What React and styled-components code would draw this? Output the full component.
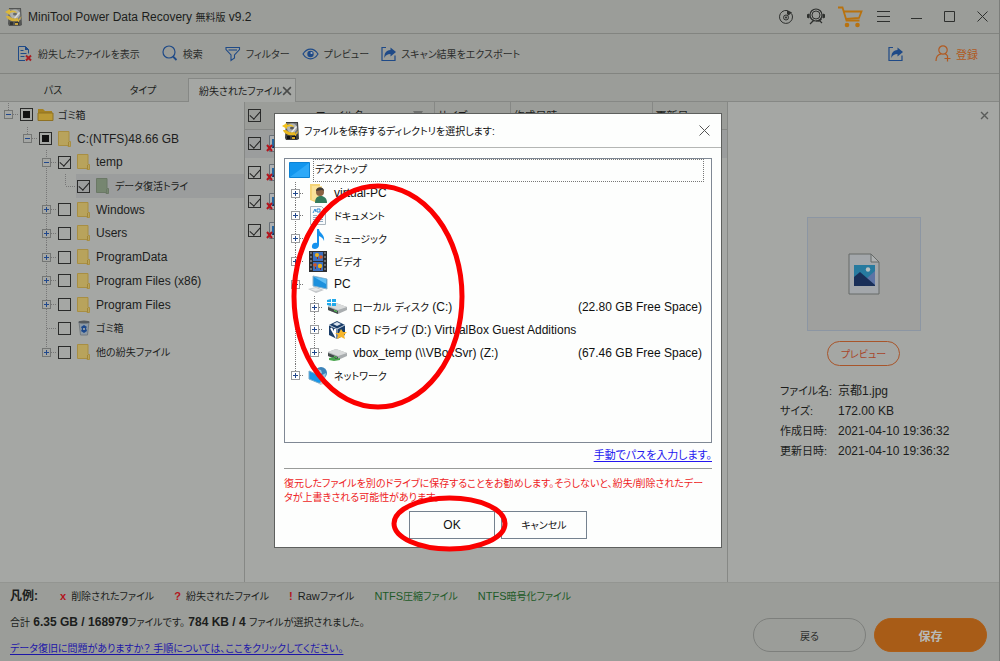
import React from "react";
import styled, { createGlobalStyle, css } from "styled-components";

const GlobalStyle = createGlobalStyle`
  * {
    box-sizing: border-box;
  }
  body {
    margin: 0;
    background: #9b9d99;
    color: #1c1d1c;
    font-family: "Liberation Sans", "Noto Sans CJK JP", sans-serif;
    font-size: 12px;
    font-feature-settings: "palt";
  }
  button, input {
    font: inherit;
    font-feature-settings: inherit;
    color: inherit;
    margin: 0;
  }
  button {
    padding: 0;
    border: 0;
    background: transparent;
    cursor: pointer;
  }
  svg {
    display: block;
    flex: none;
  }
`;

/* ---------- icons ---------- */

const AppIcon = ({ dim }) => (
  <svg width="18" height="20" viewBox="0 0 18 20" opacity={dim ? 0.75 : 1}>
    <path d="M4 1h12l1 17-2 1H4L3 17z" fill="#3b3d3e" />
    <path d="M5 2h10l1 11H4z" fill="#77797a" />
    <ellipse cx="10" cy="7" rx="5" ry="4.5" fill="#b4b7b7" />
    <ellipse cx="10" cy="7" rx="2" ry="1.6" fill="#55585a" />
    <path d="M9 11l5-6 1 1-5 6z" fill="#eee" />
    <path d="M0 5l5-3v2c4-1 6 0 7 2-3-1-5-1-7 0v2z" fill="#f2c21c" />
    <path d="M17 9l-4 4v-2c-4 1-7 0-9-2H1c1 4 6 6 12 5v2z" fill="#e8b820" />
    <path d="M5 15h3v3H5zM10 15h4v3h-4z" fill="#101112" />
    <path d="M10 16h3v2h-3z" fill="#d6a520" />
  </svg>
);

const LostFileIcon = () => (
  <svg width="16" height="17" viewBox="0 0 16 17" fill="none">
    <path d="M8 15.500H1.500V1.500h7l3 3v4" stroke="#1f4a87" />
    <path d="M8 1l4 4H8z" fill="#1f4a87" />
    <path d="M3.500 5.500h3M3.500 8.500h6M3.500 11.500h4" stroke="#1f4a87" />
    <path d="M9 10.500l5 5M14 10.500l-5 5" stroke="#a81d24" strokeWidth="2" />
  </svg>
);

const SearchIcon = () => (
  <svg width="16" height="17" viewBox="0 0 16 17" fill="none" stroke="#1f4a87">
    <circle cx="7" cy="7" r="6" strokeWidth="1.200" />
    <path d="M11 11.500l3.500 3.500" strokeWidth="1.800" />
  </svg>
);

const FilterIcon = () => (
  <svg width="16" height="16" viewBox="0 0 16 16" fill="none" stroke="#1f4a87" strokeWidth="1.100">
    <path d="M1 1.500h13.500v2L9.500 9v3L6 14.500V9L1 3.500z" />
    <path d="M3.500 4h8.500" />
  </svg>
);

const EyeIcon = () => (
  <svg width="17" height="12" viewBox="0 0 17 12" fill="none">
    <path d="M1 6c4-6.500 11-6.500 15 0-4 6.500-11 6.500-15 0z" stroke="#1f4a87" strokeWidth="1.200" />
    <circle cx="8.500" cy="6" r="3.200" fill="#1f4a87" />
    <circle cx="9.500" cy="5" r="1.100" fill="#a9b4c4" />
  </svg>
);

const ExportIcon = () => (
  <svg width="15" height="16" viewBox="0 0 15 16" fill="none">
    <path d="M5 1.500H1v13h13V9.500" stroke="#1f4a87" strokeWidth="1.200" />
    <path d="M9.500 1.500L15 6l-5.500 4.500V8C6.500 8 4.500 9 3.500 12 3 7.500 5 4.500 9.500 4z" fill="#1f4a87" />
  </svg>
);

const UserIcon = () => (
  <svg width="16" height="17" viewBox="0 0 16 17" fill="none" stroke="#b05a22" strokeWidth="1.200">
    <circle cx="8" cy="5" r="4.200" />
    <path d="M1 16c0-4 2-6.500 5-7M10 9c1 0 2 1 2.500 2M9.500 13.500h6M12.500 10.500v6" />
  </svg>
);

const DiscIcon = () => (
  <svg width="16" height="16" viewBox="0 0 16 16" fill="none" stroke="#2e302e">
    <path d="M9 1.500A6.500 6.500 0 1 0 14.500 8c0-1.500-.5-2.500-1-3.500" />
    <circle cx="8" cy="8.500" r="2.500" />
    <circle cx="8" cy="8.500" r=".7" fill="#2e302e" />
    <path d="M9 1l5 2.500-3.500 3L9 5z" fill="#2e302e" stroke="none" />
  </svg>
);

const SupportIcon = () => (
  <svg width="18" height="17" viewBox="0 0 18 17" fill="none" stroke="#2e302e">
    <circle cx="9" cy="7" r="6" strokeWidth="1.200" />
    <circle cx="9" cy="7" r="4" strokeWidth="1" />
    <path d="M7 12l-4 4M9 13h4l2 2M14.500 11l-3 2.500" strokeWidth="1.200" />
    <path d="M2 6v4l-2-1V7zM16 6v4l2-1V7z" fill="#2e302e" />
  </svg>
);

const CartIcon = () => (
  <svg width="25" height="22" viewBox="0 0 25 22" fill="none" stroke="#b8720f" strokeWidth="1.800">
    <path d="M0 1.500h4.500l4 13h13" />
    <path d="M6 5.500h17.500l-2.500 6.500-13 1" />
    <circle cx="9" cy="19" r="2.300" fill="#b8720f" stroke="none" />
    <circle cx="19.500" cy="19" r="2.300" fill="#b8720f" stroke="none" />
  </svg>
);

const LineIcon = ({ d, size = 13, color = "#2e302e", weight = 1 }) => (
  <svg width={size} height={size} viewBox="0 0 13 13" fill="none" stroke={color} strokeWidth={weight}>
    <path d={d} />
  </svg>
);

const MENU = "M0 1.500h13M0 6.500h13M0 11.500h13";
const MINIMIZE = "M1 8.500h11";
const MAXIMIZE = "M1.500 1.500h10v10h-10z";
const CLOSE = "M1.500 1.500l10 10M11.500 1.500l-10 10";

const OpenFolder = () => (
  <svg width="17" height="14" viewBox="0 0 17 14">
    <path d="M1 12V1h5l2 2h7v2H4z" fill="#a58222" />
    <path d="M1 5h15v7.500H1z" fill="#bb9a35" stroke="#8f7224" />
  </svg>
);

const Folder = ({ green }) => (
  <svg width="13" height="16" viewBox="0 0 13 16">
    <path d="M.5.500h10.500v10h1.500v5h-2.500v-1H.5z" fill={green ? "#768670" : "#b8a35c"} stroke={green ? "#6b7866" : "#a88e42"} />
    <path d="M10.500 11v4" stroke={green ? "#6b7866" : "#a18638"} />
  </svg>
);

const TrashIcon = () => (
  <svg width="14" height="16" viewBox="0 0 14 16">
    <path d="M2 2h10l-1.500 13h-7z" fill="#8d9aa6" stroke="#747b80" />
    <ellipse cx="7" cy="2" rx="5.500" ry="1.500" fill="#555a5e" />
    <path d="M4 7l3-2 3 2-1 1 1 3-3 2-3-2 1-2zM6 8v2h2V8z" fill="#1c488c" fillRule="evenodd" />
  </svg>
);

const DeletedPicture = () => (
  <svg width="18" height="18" viewBox="0 0 18 18">
    <path d="M3.500.500h13v16h-13z" fill="#adb0b2" stroke="#687078" />
    <path d="M6 4h10v9H6z" fill="#27659e" />
    <path d="M6 13l4-5 3 3 3-2v4z" fill="#142f5a" />
    <path d="M1 10l5 6M6 10l-5 6" stroke="#b3141c" strokeWidth="2" />
  </svg>
);

const PictureFile = () => (
  <svg width="32" height="42" viewBox="0 0 32 42">
    <path d="M1 1h22l8 8v32H1z" fill="#a3a7ab" stroke="#666a68" />
    <path d="M23 1v8h8z" fill="#adb0b1" stroke="#666a68" />
    <path d="M6 12h21v21H6z" fill="#277a9f" />
    <path d="M18 26l9-8v15z" fill="#5d74a5" />
    <path d="M6 24l6-5 15 13v1H6z" fill="#192f58" />
    <circle cx="20" cy="16.500" r="2.200" fill="#b9bfc0" />
  </svg>
);

const DesktopIcon = () => (
  <svg width="21" height="16" viewBox="0 0 21 16">
    <path d="M.5.500h20v15H.5z" fill="#1296ee" stroke="#0c82d4" />
    <path d="M1 15L20 1v14z" fill="#2ea9f8" />
  </svg>
);

const UserFolder = () => (
  <svg width="18" height="20" viewBox="0 0 18 20">
    <path d="M1 1h10v17l-5 1-5-2z" fill="#f5d477" />
    <path d="M3 3h10v14H3z" fill="#fae29a" />
    <path d="M6 20c0-6 3-7 6-7s6 2 6 7z" fill="#347b5d" />
    <circle cx="11" cy="9" r="4" fill="#8c6344" />
    <path d="M7 8c0-5 8-5 8 0l-2-1z" fill="#413a33" />
  </svg>
);

const DocumentIcon = () => (
  <svg width="16" height="19" viewBox="0 0 16 19">
    <path d="M.5.500h11l4 4v14H.5z" fill="#f7fafc" stroke="#a9b4bc" />
    <path d="M3 7l2-4 1 3M7 3h3v3H7z" fill="none" stroke="#3089d4" />
    <path d="M3 9.500h4M9 9.500h4M3 11.500h4M9 11.500h4M3 13.500h4M9 13.500h4M3 15.500h10" stroke="#8eaac1" />
  </svg>
);

const MusicIcon = () => (
  <svg width="14" height="20" viewBox="0 0 14 20">
    <path d="M6 0h2c0 4 6 5 5 12-1-3-3-4-5-5v9c0 5-8 5-7 1 0-3 3-4 5-3z" fill="#1492ee" />
  </svg>
);

const VideoIcon = () => (
  <svg width="18" height="21" viewBox="0 0 18 21">
    <path d="M0 0h18v21H0z" fill="#2d2e31" />
    <path d="M4 1h10v9H4zM4 11h10v9H4z" fill="#3a6fc0" />
    <path d="M2 1v20M16 1v20" stroke="#aeb0b4" strokeDasharray="2 2" />
    <circle cx="8" cy="4" r="2" fill="#edb21c" />
    <circle cx="12" cy="6" r="1.800" fill="#d9561f" />
    <circle cx="6" cy="14" r="1.800" fill="#d9561f" />
    <circle cx="11" cy="15" r="2.200" fill="#edb21c" />
    <path d="M8 7h1M11 18h1M6 17h1" stroke="#8a2c18" strokeWidth="2" />
  </svg>
);

const PcIcon = () => (
  <svg width="22" height="19" viewBox="0 0 22 19">
    <path d="M6 1l14 3v10L6 11z" fill="#1d91dd" stroke="#8eb4cc" />
    <path d="M7 2l12 7V4z" fill="#62bff4" />
    <path d="M1 14l8-2 8 3-8 3z" fill="#c5c8ca" />
    <path d="M3 14l6-1 5 2-6 1z" fill="#e8e9e9" />
  </svg>
);

const DriveIcon = ({ kind }) => (
  <svg width="22" height="16" viewBox="0 0 22 16">
    <path d="M2 7l8-3 11 4v3l-9 4L2 11z" fill="#a9adaf" />
    <path d="M2 7l8-3 11 4-9 3z" fill="#d9dbdb" />
    <path d="M2 8l10 4v3L2 11z" fill="#454b4c" />
    <path d="M8 11.500l3 1" stroke="#52dc54" />
    {kind === "system" && <path d="M1 1l4-1v3H1zM6 0h4v3H6zM1 4h4v3L1 6zM6 4h4v3H6z" fill="#22a9ea" />}
    {kind === "network" && <path d="M3 13l5-1 1 2 5-1v2l-6 1-5-1z" fill="#49a54e" />}
  </svg>
);

const VirtualBoxIcon = () => (
  <svg width="19" height="20" viewBox="0 0 19 20">
    <path d="M1 5l8-4 8 4v10l-8 4-8-4z" fill="#183c68" />
    <path d="M1 5l8 4 8-4M9 9v10" stroke="#c9d3de" fill="none" />
    <path d="M5 4l4-2 4 2-4 2z" fill="#d9e4ef" />
    <path d="M3 8l4 7V9" stroke="#fff" strokeWidth="2" fill="none" />
    <path d="M13 9l2 3h4l-3 3 1 4-4-2-4 2 1-4-3-2h4z" fill="#f6b62b" />
  </svg>
);

const NetworkIcon = () => (
  <svg width="22" height="20" viewBox="0 0 22 20">
    <circle cx="14" cy="7" r="6" fill="#3c83b9" />
    <path d="M10 3l4 1 1 3-3 2-3-3zM15 9l4-2-1 5-3 1z" fill="#98c5dd" />
    <path d="M2 5l12 5v8L2 13z" fill="#1796e8" stroke="#7cabc8" />
    <path d="M12 17l6-2 2 2-7 2z" fill="#c8cccd" />
  </svg>
);

/* ---------- text ---------- */

const Kana = styled.span`
  font-size: 10px;
  line-height: 1;
`;

// Japanese runs are set smaller than the latin ones beside them
const Mixed = ({ children }) =>
  children
    .split(/([\u3000-\u9fff\uff00-\uffef]+)/)
    .map((part, i) => (i % 2 ? <Kana key={i}>{part}</Kana> : part));

/* ---------- window frame ---------- */

const Window = styled.div`
  display: flex;
  flex-direction: column;
  min-height: 100vh;
  border-right: 1px solid #7b7d7a;
`;

const TitleBar = styled.header`
  display: flex;
  align-items: center;
  height: 34px;
  padding: 0 10px 0 5px;
  border-bottom: 1px solid #828480;
`;

const AppTitle = styled.h1`
  flex: 1;
  margin: 0 0 0 5px;
  font-size: 12px;
  font-weight: 400;
`;

const WindowButtons = styled.div`
  display: flex;
  align-items: center;
  gap: 20px;
`;

const QuickButtons = styled(WindowButtons)`
  gap: 13px;
  margin-right: 14px;
`;

const ToolBar = styled.nav`
  display: flex;
  align-items: center;
  gap: 12px;
  height: 40px;
  padding: 0 21px 0 17px;
  border-bottom: 1px solid #828480;
`;

const ToolButton = styled.button`
  display: flex;
  align-items: center;
  gap: 5px;
  font-size: ${(p) => (p.$accent ? 11 : 10)}px;
  white-space: nowrap;
  color: ${(p) => (p.$accent ? "#b05a22" : "#2c2d2c")};
  margin-left: ${(p) => (p.$push ? "auto" : "0")};
  margin-right: ${(p) => p.$after || 0}px;
`;

const TabBar = styled.div`
  display: flex;
  align-items: flex-end;
  height: 28px;
  padding-left: 8px;
  border-bottom: 1px solid #868885;
`;

const Tab = styled.button`
  width: 90px;
  height: 23px;
  font-size: 10px;
  white-space: nowrap;
  ${(p) =>
    p.$active &&
    css`
      display: flex;
      align-items: center;
      justify-content: flex-end;
      width: 108px;
      height: 24px;
      margin-bottom: -1px;
      padding-right: 3px;
      border: 1px solid #868885;
      border-bottom: 0;
      background: #a5a7a4;
    `}
`;

const Main = styled.main`
  display: grid;
  grid-template-columns: 244px 1fr 271px;
  flex: 1;
  background: #a5a7a4;
`;

/* ---------- trees ---------- */

const dotsDown = "repeating-linear-gradient(#777 0 1px, transparent 1px 2px)";
const dotsAcross = "repeating-linear-gradient(90deg, #777 0 1px, transparent 1px 2px)";

const TreeList = styled.ul`
  display: grid;
  grid-auto-rows: 1fr;
  height: 262px;
  margin: 0;
  padding: 1px 0 0;
  list-style: none;
`;

const PathList = styled(TreeList)`
  height: 228px;
  padding: 0;
`;

const TreeRow = styled.li`
  display: flex;
  align-items: stretch;
  white-space: nowrap;
`;

const Guide = styled.span`
  display: flex;
  align-items: center;
  width: 19px;
  padding-left: ${(p) => (p.$wide ? 6 : 4)}px;
  background-repeat: no-repeat;
  background-image: ${(p) =>
    p.$line === "none" ? "none" : p.$line === "through" ? dotsDown : `${dotsDown}, ${dotsAcross}`};
  background-position: ${(p) => (p.$wide ? 10 : 8)}px 0, right center;
  background-size: 1px ${(p) => (p.$line === "end" ? "50%" : "100%")}, 10px 1px;
`;

const Expander = styled.button`
  width: 9px;
  height: 9px;
  border: 1px solid ${(p) => (p.$light ? "#9a9c9e" : "#747674")};
  color: #21488c;
  background:
    linear-gradient(currentColor, currentColor) center / 5px 1px no-repeat,
    linear-gradient(currentColor, currentColor) center / 1px ${(p) => (p.$open ? 1 : 5)}px no-repeat,
    ${(p) => (p.$light ? "#fff" : "#a5a7a4")};
`;

const NodeLabel = styled.label`
  display: flex;
  align-items: center;
  flex: 1;
  padding-left: 1px;
  background: ${(p) => (p.$selected ? "#9b9d9d" : "none")};
`;

const Checkbox = styled.input.attrs({ type: "checkbox" })`
  appearance: none;
  display: grid;
  place-items: center;
  flex: none;
  width: 13px;
  height: 13px;
  border: 1px solid #2a2b2a;
  &:checked::after {
    content: "";
    width: 9px;
    height: 5px;
    border-left: 1px solid #222;
    border-bottom: 1px solid #222;
    transform: translateY(-1px) rotate(-48deg);
  }
  ${(p) =>
    p.$partial &&
    css`
      &::after {
        content: "";
        width: 7px;
        height: 7px;
        background: #111;
      }
    `}
`;

const IconSlot = styled.span`
  display: flex;
  align-items: center;
  justify-content: center;
  flex: none;
  width: ${(p) => (p.$wide ? 28 : 25)}px;
`;

/* ---------- file table ---------- */

const FilePane = styled.section`
  min-width: 0;
  overflow: hidden;
  border-left: 1px solid #868885;
  border-right: 1px solid #868885;
`;

const FileTable = styled.table`
  width: 100%;
  table-layout: fixed;
  border-collapse: collapse;
  th {
    height: 27px;
    padding: 0 3px;
    border-bottom: 1px solid #868885;
    background: #9b9d99;
    font-size: 11px;
    font-weight: 400;
    text-align: left;
    white-space: nowrap;
  }
  th + th + th {
    border-left: 1px solid #868885;
  }
  td {
    height: 29px;
    padding: 0 3px;
  }
  tbody tr:first-child {
    background: #9b9d9d;
  }
`;

const HeadCell = styled.div`
  display: flex;
  align-items: center;
  justify-content: space-between;
  padding: 0 8px 0 50px;
`;

const SortArrow = styled.span`
  border: 5px solid transparent;
  border-top: 8px solid #6e706e;
  border-bottom: 0;
`;

/* ---------- preview pane ---------- */

const PreviewPane = styled.aside`
  display: flex;
  flex-direction: column;
  align-items: center;
`;

const PaneClose = styled.button`
  align-self: flex-end;
  padding: 9px 10px;
`;

const Thumbnail = styled.div`
  display: flex;
  align-items: center;
  justify-content: center;
  width: 114px;
  height: 114px;
  margin-top: 88px;
  border: 1px solid #8c96a3;
  background: #9fa09e;
`;

const PreviewButton = styled.button`
  width: 73px;
  height: 25px;
  margin: 10px 0 15px;
  border: 1px solid #a8552a;
  border-radius: 13px;
  color: #a8452a;
  font-size: 10px;
`;

const FileInfo = styled.dl`
  display: grid;
  grid-template-columns: 58px 1fr;
  align-self: stretch;
  margin: 0 0 0 52px;
  line-height: 20px;
  dt {
    font-size: 11px;
  }
  dd {
    margin: 0;
  }
`;

/* ---------- footer ---------- */

const Footer = styled.footer`
  display: flex;
  justify-content: space-between;
  align-items: flex-start;
  height: 79px;
  padding: 0 12px 0 10px;
  border-top: 1px solid #939591;
  background: #9b9d99;
`;

const Notes = styled.div`
  line-height: 26px;
  white-space: nowrap;
  p {
    height: 26px;
    margin: 0;
  }
`;

const Legend = styled.p`
  display: flex;
  gap: 20px;
`;

const LegendTitle = styled.b`
  margin-right: 2px;
`;

const LegendItem = styled.span`
  font-size: 11px;
  color: ${(p) => (p.$green ? "#1c5a26" : "inherit")};
`;

const Mark = styled.b`
  margin-right: 5px;
  color: #b3141c;
`;

const Link = styled.a`
  color: ${(p) => (p.$bright ? "#2416f0" : "#1d16a8")};
  font-size: ${(p) => (p.$bright ? 11 : 10)}px;
  text-underline-offset: 2px;
`;

const FooterButtons = styled.div`
  display: flex;
  gap: 8px;
  margin-top: 35px;
`;

const PillButton = styled.button`
  width: 113px;
  height: 34px;
  border: 1px solid ${(p) => (p.$primary ? "#ac5f19" : "#7d7f7c")};
  border-radius: 17px;
  background: ${(p) => (p.$primary ? "#a85c17" : "transparent")};
  color: ${(p) => (p.$primary ? "#b8bab8" : "#2c2d2c")};
  font-size: ${(p) => (p.$primary ? 12 : 10)}px;
  font-weight: ${(p) => (p.$primary ? 700 : 400)};
`;

/* ---------- dialog ---------- */

const Overlay = styled.div`
  position: fixed;
  inset: 0;
  display: flex;
  align-items: center;
  justify-content: center;
  padding-right: 4px;
`;

const Dialog = styled.div`
  position: relative;
  width: 448px;
  border: 1px solid #5e605e;
  background: #fdfefd;
  color: #111;
`;

const DialogHead = styled.div`
  display: flex;
  align-items: center;
  gap: 4px;
  height: 34px;
  padding: 0 10px 0 7px;
  border-bottom: 1px solid #b4b6b4;
  h2 {
    flex: 1;
    margin: 0;
    font-size: 10px;
    font-weight: 400;
  }
`;

const DialogBody = styled.div`
  padding: 10px 9px 8px;
`;

const PathBox = styled.div`
  height: 285px;
  border: 1px solid #7f8894;
`;

const PathName = styled.span`
  display: flex;
  align-items: center;
  justify-content: space-between;
  flex: 1;
  margin-right: ${(p) => (p.$focused ? 7 : 9)}px;
  padding-left: ${(p) => (p.$focused ? 1 : 2)}px;
  border: ${(p) => (p.$focused ? "1px dotted #777" : "0")};
`;

const ManualPath = styled.div`
  height: 26px;
  line-height: 24px;
  text-align: right;
  border-bottom: 1px solid #999b99;
`;

const Warning = styled.p`
  margin: 8px 0 6px;
  color: #ee1c24;
  font-size: 10px;
  line-height: 14px;
`;

const DialogButtons = styled.div`
  display: flex;
  justify-content: center;
  gap: 6px;
`;

const DialogButton = styled.button`
  width: 86px;
  height: 28px;
  border: 1px solid #75828f;
  background: #fdfefd;
`;

const Marker = styled.svg`
  position: absolute;
  left: ${(p) => p.$x}px;
  top: ${(p) => p.$y}px;
  pointer-events: none;
`;

const RedEllipse = ({ x, y, w, h }) => (
  <Marker $x={x} $y={y} width={w} height={h}>
    <ellipse cx={w / 2} cy={h / 2} rx={w / 2 - 3} ry={h / 2 - 3} fill="none" stroke="#fb0000" strokeWidth="5" />
  </Marker>
);

/* ---------- data ---------- */

const nodes = [
  { name: "ゴミ箱", level: 0, open: true, partial: true, icon: <OpenFolder /> },
  { name: "C:(NTFS)48.66 GB", level: 1, open: true, partial: true },
  { name: "temp", level: 2, open: true, checked: true },
  { name: "データ復活トライ", level: 3, leaf: true, checked: true, selected: true, icon: <Folder green />, last: true },
  { name: "Windows", level: 2 },
  { name: "Users", level: 2 },
  { name: "ProgramData", level: 2 },
  { name: "Program Files (x86)", level: 2 },
  { name: "Program Files", level: 2 },
  { name: "ゴミ箱", level: 2, leaf: true, icon: <TrashIcon /> },
  { name: "他の紛失ファイル", level: 2, last: true },
];

const paths = [
  { name: "virtual-PC", level: 1, icon: <UserFolder /> },
  { name: "ドキュメント", level: 1, icon: <DocumentIcon /> },
  { name: "ミュージック", level: 1, icon: <MusicIcon /> },
  { name: "ビデオ", level: 1, icon: <VideoIcon /> },
  { name: "PC", level: 1, open: true, icon: <PcIcon /> },
  { name: "ローカル ディスク (C:)", level: 2, free: "(22.80 GB Free Space)", icon: <DriveIcon kind="system" /> },
  { name: "CD ドライブ (D:) VirtualBox Guest Additions", level: 2, icon: <VirtualBoxIcon /> },
  { name: "vbox_temp (\\\\VBoxSvr) (Z:)", level: 2, free: "(67.46 GB Free Space)", icon: <DriveIcon kind="network" />, last: true },
  { name: "ネットワーク", level: 1, icon: <NetworkIcon />, last: true },
];

const info = [
  ["ファイル名:", "京都1.jpg"],
  ["サイズ:", "172.00 KB"],
  ["作成日時:", "2021-04-10 19:36:32"],
  ["更新日時:", "2021-04-10 19:36:32"],
];

const FolderTree = () => (
  <TreeList>
    {nodes.map((n, i) => (
      <TreeRow key={i}>
        {Array.from({ length: n.level }, (_, l) => (
          <Guide key={l} $line={n.level === 3 && l === 2 ? "through" : "none"} />
        ))}
        <Guide $line={n.last || n.level < 2 ? "end" : "tee"}>
          {!n.leaf && <Expander $open={n.open} aria-label={n.name} />}
        </Guide>
        <NodeLabel $selected={n.selected}>
          <Checkbox defaultChecked={n.checked} $partial={n.partial} />
          <IconSlot>{n.icon || <Folder />}</IconSlot>
          <span><Mixed>{n.name}</Mixed></span>
        </NodeLabel>
      </TreeRow>
    ))}
  </TreeList>
);

const PathTree = () => (
  <PathList>
    <TreeRow>
      <IconSlot $wide><DesktopIcon /></IconSlot>
      <PathName $focused><Mixed>デスクトップ</Mixed></PathName>
    </TreeRow>
    {paths.map((p) => (
      <TreeRow key={p.name}>
        {p.level === 2 && <Guide $wide $line="through" />}
        <Guide $wide $line={p.last ? "end" : "tee"}>
          <Expander $light $open={p.open} aria-label={p.name} />
        </Guide>
        <IconSlot $wide>{p.icon}</IconSlot>
        <PathName>
          <span><Mixed>{p.name}</Mixed></span>
          {p.free && <span>{p.free}</span>}
        </PathName>
      </TreeRow>
    ))}
  </PathList>
);

const SaveDialog = () => (
  <Overlay>
    <Dialog role="dialog" aria-labelledby="save-title">
      <DialogHead>
        <AppIcon />
        <h2 id="save-title">ファイルを保存するディレクトリを選択します:</h2>
        <button aria-label="閉じる"><LineIcon d={CLOSE} color="#555" /></button>
      </DialogHead>
      <DialogBody>
        <PathBox>
          <PathTree />
        </PathBox>
        <ManualPath>
          <Link $bright href="#path">手動でパスを入力します。</Link>
        </ManualPath>
        <Warning>
          復元したファイルを別のドライブに保存することをお勧めします。そうしないと、紛失/削除されたデー<br />
          タが上書きされる可能性があります。
        </Warning>
        <DialogButtons>
          <DialogButton>OK</DialogButton>
          <DialogButton><Mixed>キャンセル</Mixed></DialogButton>
        </DialogButtons>
      </DialogBody>
      <RedEllipse x={16} y={69} w={174} h={227} />
      <RedEllipse x={116} y={381} w={117} h={57} />
    </Dialog>
  </Overlay>
);

const App = () => {
  return (
    <Window lang="ja">
      <GlobalStyle />
      <TitleBar>
        <AppIcon dim />
        <AppTitle><Mixed>MiniTool Power Data Recovery 無料版 v9.2</Mixed></AppTitle>
        <QuickButtons>
          <button aria-label="ディスク"><DiscIcon /></button>
          <button aria-label="サポート"><SupportIcon /></button>
          <button aria-label="購入"><CartIcon /></button>
        </QuickButtons>
        <WindowButtons>
          <button aria-label="メニュー"><LineIcon d={MENU} /></button>
          <button aria-label="最小化"><LineIcon d={MINIMIZE} /></button>
          <button aria-label="最大化"><LineIcon d={MAXIMIZE} /></button>
          <button aria-label="閉じる"><LineIcon d={CLOSE} /></button>
        </WindowButtons>
      </TitleBar>

      <ToolBar>
        <ToolButton $after={10}><LostFileIcon />紛失したファイルを表示</ToolButton>
        <ToolButton $after={10}><SearchIcon />検索</ToolButton>
        <ToolButton><FilterIcon />フィルター</ToolButton>
        <ToolButton><EyeIcon />プレビュー</ToolButton>
        <ToolButton><ExportIcon />スキャン結果をエクスポート</ToolButton>
        <ToolButton $push $after={20} aria-label="共有"><ExportIcon /></ToolButton>
        <ToolButton $accent><UserIcon />登録</ToolButton>
      </ToolBar>

      <TabBar>
        <Tab>パス</Tab>
        <Tab>タイプ</Tab>
        <Tab $active>
          紛失されたファイル
          <LineIcon d={CLOSE} size={10} color="#4a4b4a" weight={2} />
        </Tab>
      </TabBar>

      <Main>
        <FolderTree />
        <FilePane>
          <FileTable>
            <colgroup>
              <col style={{ width: 18 }} />
              <col />
              <col style={{ width: 76 }} />
              <col style={{ width: 142 }} />
              <col style={{ width: 75 }} />
            </colgroup>
            <thead>
              <tr>
                <th><Checkbox defaultChecked aria-label="すべて選択" /></th>
                <th><HeadCell>ファイル名<SortArrow /></HeadCell></th>
                <th>サイズ</th>
                <th>作成日時</th>
                <th>更新日</th>
              </tr>
            </thead>
            <tbody>
              {[1, 2, 3, 4].map((n) => (
                <tr key={n}>
                  <td><Checkbox defaultChecked aria-label={`ファイル ${n}`} /></td>
                  <td colSpan={4}><DeletedPicture /></td>
                </tr>
              ))}
            </tbody>
          </FileTable>
        </FilePane>
        <PreviewPane>
          <PaneClose aria-label="閉じる"><LineIcon d={CLOSE} size={9} color="#5a5c5a" weight={2} /></PaneClose>
          <Thumbnail><PictureFile /></Thumbnail>
          <PreviewButton>プレビュー</PreviewButton>
          <FileInfo>
            {info.map(([label, value]) => (
              <React.Fragment key={label}>
                <dt>{label}</dt>
                <dd>{value}</dd>
              </React.Fragment>
            ))}
          </FileInfo>
        </PreviewPane>
      </Main>

      <Footer>
        <Notes>
          <Legend>
            <LegendTitle>凡例:</LegendTitle>
            <LegendItem><Mark>x</Mark><Mixed>削除されたファイル</Mixed></LegendItem>
            <LegendItem><Mark>?</Mark><Mixed>紛失されたファイル</Mixed></LegendItem>
            <LegendItem><Mark>!</Mark><Mixed>Rawファイル</Mixed></LegendItem>
            <LegendItem $green><Mixed>NTFS圧縮ファイル</Mixed></LegendItem>
            <LegendItem $green><Mixed>NTFS暗号化ファイル</Mixed></LegendItem>
          </Legend>
          <p>
            <Kana>合計</Kana> <b>6.35 GB / 168979</b><Kana>ファイルです。</Kana> <b>784 KB / 4</b>{" "}
            <Kana>ファイルが選択されました。</Kana>
          </p>
          <p>
            <Link href="#help">データ復旧に問題がありますか？ 手順については、ここをクリックしてください。</Link>
          </p>
        </Notes>
        <FooterButtons>
          <PillButton>戻る</PillButton>
          <PillButton $primary>保存</PillButton>
        </FooterButtons>
      </Footer>
      <SaveDialog />
    </Window>
  );
};

export default App;
